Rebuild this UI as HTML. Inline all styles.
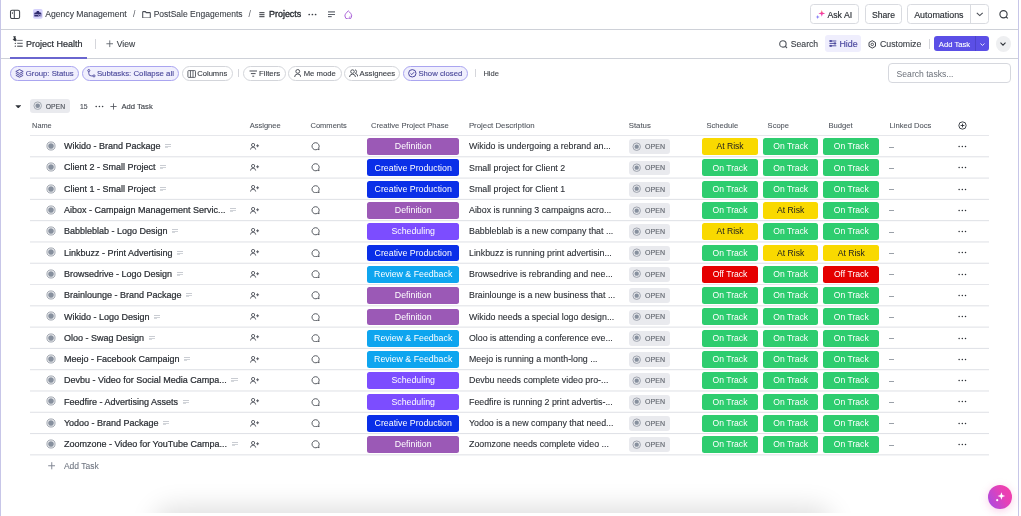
<!DOCTYPE html><html><head><meta charset="utf-8"><style>
html,body{margin:0;padding:0;background:#fff;}
body{width:1021px;height:516px;position:relative;overflow:hidden;font-family:"Liberation Sans", sans-serif;}
#w{position:absolute;left:0;top:0;width:1021px;height:516px;will-change:transform;}
.t{position:absolute;white-space:nowrap;}
.b{position:absolute;}
.nm{font-size:9.0px;line-height:9.0px;color:#2a2e34;-webkit-text-stroke:0.22px #2a2e34;}
.di{display:inline-block;width:6.2px;height:4px;margin-left:4.6px;vertical-align:1.4px;background:linear-gradient(#c9ccd2 0 0.9px,transparent 0.9px 1.9px,#d0d3d8 1.9px 2.8px,transparent 2.8px),linear-gradient(#d6d9dd,#d6d9dd) 0 3px/3.2px 1px no-repeat;}
.tg{font-size:8.6px;line-height:8.6px;text-align:center;}
.ds{font-size:8.83px;line-height:8.83px;color:#2a2e34;-webkit-text-stroke:0.1px #2a2e34;}
</style></head><body><div id="w"><div class="b" style="left:0.00px;top:0.00px;width:1.00px;height:516.00px;background:#c7c6e8"></div>
<div class="b" style="left:1018.00px;top:0.00px;width:1.00px;height:516.00px;background:#c7c6e8"></div>
<div class="b" style="left:1.00px;top:29.00px;width:1017.00px;height:1.00px;background:#ced1d8"></div>
<div class="b" style="left:1.00px;top:58.00px;width:1017.00px;height:1.00px;background:#ced1d8"></div>
<svg class="b" style="left:9.00px;top:9.00px" width="12" height="11" viewBox="0 0 12 11" fill="none"><rect x="1.5" y="1.3" width="9.1" height="8.2" rx="1.5" stroke="#3f434a" stroke-width="1.05"/><line x1="5.3" y1="1.3" x2="5.3" y2="9.5" stroke="#3f434a" stroke-width="1"/><line x1="3.4" y1="3.2" x2="3.4" y2="4.9" stroke="#3f434a" stroke-width="0.9"/></svg>
<svg class="b" style="left:32.60px;top:9.20px" width="10" height="10" viewBox="0 0 10 10" fill="none"><rect x="0" y="0" width="9.6" height="9.8" rx="1.8" fill="#d5d1fc"/><path d="M1.3 4.2 Q1.3 3.4 2.1 3.4 H3.2 L3.9 2 H5.8 L6.6 3.4 H7.4 Q8.3 3.4 8.3 4.3 V7.6 H1.3 Z" fill="#2f2b6e"/><rect x="1.3" y="5.1" width="4.2" height="0.6" fill="#d5d1fc"/><circle cx="6.8" cy="6.6" r="1.3" fill="#d5d1fc"/><circle cx="6.8" cy="6.6" r="0.75" fill="#2f2b6e"/></svg>
<div class="t" style="left:45.20px;top:10.00px;font-size:8.65px;line-height:8.65px;color:#3b3f46;font-weight:400;-webkit-text-stroke:0.1px #3b3f46;">Agency Management</div>
<div class="t" style="left:133.00px;top:10.00px;font-size:8.6px;line-height:8.6px;color:#50545c;font-weight:400;">/</div>
<svg class="b" style="left:141.50px;top:10.80px" width="9" height="7.5" viewBox="0 0 9 7.5" fill="none"><path d="M0.7 1.2 Q0.7 0.6 1.3 0.6 H3.4 L4.2 1.6 H7.7 Q8.3 1.6 8.3 2.2 V6.3 Q8.3 6.9 7.7 6.9 H1.3 Q0.7 6.9 0.7 6.3 Z" stroke="#4a4e56" stroke-width="1.05"/></svg>
<div class="t" style="left:153.70px;top:10.00px;font-size:8.5px;line-height:8.5px;color:#3b3f46;font-weight:400;-webkit-text-stroke:0.1px #3b3f46;">PostSale Engagements</div>
<div class="t" style="left:248.50px;top:10.00px;font-size:8.6px;line-height:8.6px;color:#50545c;font-weight:400;">/</div>
<svg class="b" style="left:258.50px;top:12.00px" width="6" height="5.5" viewBox="0 0 6 5.5" fill="none"><line x1="0.3" y1="0.7" x2="5.5" y2="0.7" stroke="#30343b" stroke-width="1"/><line x1="0.3" y1="2.7" x2="5.5" y2="2.7" stroke="#30343b" stroke-width="1"/><line x1="0.3" y1="4.7" x2="5.5" y2="4.7" stroke="#30343b" stroke-width="1"/></svg>
<div class="t" style="left:269.00px;top:10.00px;font-size:8.95px;line-height:8.95px;color:#2a2e34;font-weight:400;-webkit-text-stroke:0.35px #2a2e34;">Projects</div>
<svg class="b" style="left:307.80px;top:13.00px" width="9" height="3" viewBox="0 0 9 3" fill="none"><circle cx="1.2" cy="1.5" r="0.85" fill="#3b3f46"/><circle cx="4.4" cy="1.5" r="0.85" fill="#3b3f46"/><circle cx="7.6" cy="1.5" r="0.85" fill="#3b3f46"/></svg>
<svg class="b" style="left:327.00px;top:11.00px" width="9" height="7" viewBox="0 0 9 7" fill="none"><line x1="1" y1="0.9" x2="8" y2="0.9" stroke="#5f646c" stroke-width="1.2"/><line x1="1" y1="3.5" x2="8" y2="3.5" stroke="#5f646c" stroke-width="1"/><line x1="1" y1="5.6" x2="4.7" y2="5.6" stroke="#5f646c" stroke-width="1.1"/></svg>
<svg class="b" style="left:344.30px;top:9.60px" width="9" height="9.5" viewBox="0 0 9 9.5" fill="none"><path d="M4.3 0.9 C6.3 2.6 7.7 4.4 7.7 5.9 A3.4 3.2 0 0 1 0.9 5.9 C0.9 4.4 2.3 2.6 4.3 0.9 Z" stroke="#a55ad6" stroke-width="0.95"/><path d="M4.6 8 L6.4 6.3" stroke="#a55ad6" stroke-width="0.85"/></svg>
<div class="b" style="left:810.20px;top:4.40px;width:49.30px;height:19.60px;border:1px solid #d9dbe0;border-radius:3.5px;box-sizing:border-box;background:#fff;"></div>
<svg class="b" style="left:814.50px;top:8.70px" width="11" height="10" viewBox="0 0 11 10" fill="none"><defs><linearGradient id="sg" x1="0" y1="0" x2="0" y2="1"><stop offset="0" stop-color="#fb8a4a"/><stop offset="0.45" stop-color="#f43f9a"/><stop offset="1" stop-color="#e83fd0"/></linearGradient></defs><path d="M6.8 1 L7.6 3.6 L10.2 4.4 L7.6 5.2 L6.8 7.8 L6 5.2 L3.4 4.4 L6 3.6 Z" fill="url(#sg)"/><path d="M2.7 5.9 L3.2 7.4 L4.7 7.9 L3.2 8.4 L2.7 9.9 L2.2 8.4 L0.7 7.9 L2.2 7.4 Z" fill="#7a70f5"/></svg>
<div class="t" style="left:827.40px;top:11.00px;font-size:8.75px;line-height:8.75px;color:#2a2e34;font-weight:400;-webkit-text-stroke:0.15px #2a2e34;">Ask AI</div>
<div class="b" style="left:865.00px;top:4.40px;width:37.20px;height:19.60px;border:1px solid #d9dbe0;border-radius:3.5px;box-sizing:border-box;background:#fff;"></div>
<div class="t" style="left:872.00px;top:11.00px;font-size:8.6px;line-height:8.6px;color:#2a2e34;font-weight:400;-webkit-text-stroke:0.15px #2a2e34;">Share</div>
<div class="b" style="left:907.30px;top:4.40px;width:81.30px;height:19.60px;border:1px solid #d9dbe0;border-radius:3.5px;box-sizing:border-box;background:#fff;"></div>
<div class="b" style="left:969.90px;top:5.00px;width:1.00px;height:18.50px;background:#d9dbe0"></div>
<div class="t" style="left:914.20px;top:11.00px;font-size:8.9px;line-height:8.9px;color:#2a2e34;font-weight:400;-webkit-text-stroke:0.15px #2a2e34;">Automations</div>
<svg class="b" style="left:976.00px;top:12.30px" width="7.5" height="4.5" viewBox="0 0 7.5 4.5" fill="none"><path d="M0.8 0.8 L3.75 3.6 L6.7 0.8" stroke="#4a4e56" stroke-width="1.1"/></svg>
<svg class="b" style="left:998.50px;top:10.00px" width="10.5" height="9" viewBox="0 0 10.5 9" fill="none"><circle cx="4.5" cy="4.2" r="3.6" stroke="#3b3f46" stroke-width="1.15"/><path d="M7 6.8 L8.8 8.4" stroke="#3b3f46" stroke-width="1.15"/></svg>
<svg class="b" style="left:12.00px;top:36.00px" width="11.5" height="11.5" viewBox="0 0 11.5 11.5" fill="none"><path d="M1.2 0.8 H3.9 M2.6 0.8 L2.2 2.6 L1.2 3.6 L3.6 5 L4.2 4.2 Z" stroke="#2f333a" stroke-width="0.9" fill="#2f333a"/><line x1="5.2" y1="4.4" x2="10.7" y2="4.4" stroke="#7b7f87" stroke-width="1"/><circle cx="3.3" cy="7.3" r="0.65" fill="#2f333a"/><line x1="5.2" y1="7.3" x2="10.7" y2="7.3" stroke="#555a62" stroke-width="1"/><circle cx="3.3" cy="10.2" r="0.65" fill="#2f333a"/><line x1="5.2" y1="10.2" x2="10.7" y2="10.2" stroke="#2f333a" stroke-width="1"/></svg>
<div class="t" style="left:26.10px;top:40.00px;font-size:9.0px;line-height:9.0px;color:#2a2e34;font-weight:400;-webkit-text-stroke:0.2px #2a2e34;">Project Health</div>
<div class="b" style="left:10.00px;top:57.00px;width:77.00px;height:2.00px;background:#6a66cf"></div>
<div class="b" style="left:95.00px;top:39.00px;width:1.00px;height:9.60px;background:#d5d6db"></div>
<svg class="b" style="left:105.50px;top:40.00px" width="7.5" height="7.5" viewBox="0 0 7.5 7.5" fill="none"><path d="M3.75 0.4 V7.1 M0.4 3.75 H7.1" stroke="#5a5f67" stroke-width="0.85"/></svg>
<div class="t" style="left:116.80px;top:40.00px;font-size:8.56px;line-height:8.56px;color:#3b3f46;font-weight:400;-webkit-text-stroke:0.12px #3b3f46;">View</div>
<svg class="b" style="left:778.50px;top:39.80px" width="9" height="9" viewBox="0 0 9 9" fill="none"><circle cx="3.9" cy="3.9" r="3.2" stroke="#50545c" stroke-width="1.1"/><path d="M6.2 6.2 L8 8" stroke="#50545c" stroke-width="1.1"/></svg>
<div class="t" style="left:790.80px;top:40.00px;font-size:8.65px;line-height:8.65px;color:#3b3f46;font-weight:400;-webkit-text-stroke:0.12px #3b3f46;">Search</div>
<div class="b" style="left:824.50px;top:35.30px;width:36.20px;height:16.60px;background:#efeefd;border-radius:3px"></div>
<svg class="b" style="left:828.50px;top:40.20px" width="8" height="7" viewBox="0 0 8 7" fill="none"><path d="M0.5 1 H7.3 M0.5 3.4 H7.3 M0.5 5.8 H7.3" stroke="#4d4a9e" stroke-width="0.95"/><rect x="0.6" y="0.1" width="2.2" height="1.9" fill="#4d4a9e"/><rect x="4.8" y="2.5" width="2.2" height="1.9" fill="#4d4a9e"/><rect x="0.6" y="4.9" width="2.2" height="1.9" fill="#4d4a9e"/></svg>
<div class="t" style="left:839.40px;top:40.00px;font-size:8.85px;line-height:8.85px;color:#4a479e;font-weight:400;-webkit-text-stroke:0.15px #4a479e;">Hide</div>
<svg class="b" style="left:867.50px;top:39.70px" width="9" height="9" viewBox="0 0 9 9" fill="none"><path d="M4.25 0.7 L7.5 2.55 V6.25 L4.25 8.1 L1 6.25 V2.55 Z" stroke="#3f434a" stroke-width="1.0" stroke-linejoin="round"/><circle cx="4.25" cy="4.4" r="1.25" stroke="#3f434a" stroke-width="0.9"/></svg>
<div class="t" style="left:880.00px;top:40.00px;font-size:8.76px;line-height:8.76px;color:#3b3f46;font-weight:400;-webkit-text-stroke:0.12px #3b3f46;">Customize</div>
<div class="b" style="left:929.00px;top:39.00px;width:1.00px;height:9.60px;background:#d5d6db"></div>
<div class="b" style="left:933.60px;top:36.40px;width:55.20px;height:14.80px;background:#5b4fe6;border-radius:3px"></div>
<div class="b" style="left:975.20px;top:36.40px;width:0.80px;height:14.80px;background:#4d43cc"></div>
<div class="t" style="left:938.80px;top:41.00px;font-size:7.67px;line-height:7.67px;color:#ffffff;font-weight:400;-webkit-text-stroke:0.1px #ffffff;">Add Task</div>
<svg class="b" style="left:979.60px;top:42.60px" width="5" height="3.2" viewBox="0 0 5 3.2" fill="none"><path d="M0.5 0.5 L2.5 2.5 L4.5 0.5" stroke="#fff" stroke-width="0.85"/></svg>
<div class="b" style="left:995.50px;top:35.80px;width:15.80px;height:16.00px;background:#eeeff1;border-radius:50%"></div>
<svg class="b" style="left:1000.40px;top:42.40px" width="6" height="4" viewBox="0 0 6 4" fill="none"><path d="M0.5 0.6 L3 3.2 L5.5 0.6" stroke="#30343b" stroke-width="1.05"/></svg>
<div class="b" style="left:10.20px;top:66.00px;width:68.80px;height:14.70px;border:1px solid #aaa5f0;background:#f0effd;border-radius:8px;box-sizing:border-box"></div>
<svg class="b" style="left:14.80px;top:69.00px" width="9" height="9" viewBox="0 0 9 9" fill="none"><path d="M4.5 0.6 L8.2 2.5 L4.5 4.4 L0.8 2.5 Z" stroke="#4b479c" stroke-width="0.95" stroke-linejoin="round"/><path d="M0.8 4.4 L4.5 6.3 L8.2 4.4" stroke="#4b479c" stroke-width="0.95"/><path d="M0.8 6.3 L4.5 8.2 L8.2 6.3" stroke="#4b479c" stroke-width="0.95"/></svg>
<div class="t" style="left:25.80px;top:70.00px;font-size:7.75px;line-height:7.75px;color:#49479a;font-weight:400;-webkit-text-stroke:0.12px #49479a;">Group: Status</div>
<div class="b" style="left:81.90px;top:66.00px;width:97.60px;height:14.70px;border:1px solid #aaa5f0;background:#f0effd;border-radius:8px;box-sizing:border-box"></div>
<svg class="b" style="left:86.50px;top:68.80px" width="9" height="9" viewBox="0 0 9 9" fill="none"><circle cx="1.8" cy="1.6" r="1.05" stroke="#4b479c" stroke-width="0.9"/><circle cx="7" cy="6.9" r="1.05" stroke="#4b479c" stroke-width="0.9"/><path d="M1.8 2.7 V4.6 Q1.8 6.9 4.2 6.9 H5.9" stroke="#4b479c" stroke-width="0.9"/></svg>
<div class="t" style="left:96.90px;top:70.00px;font-size:7.84px;line-height:7.84px;color:#49479a;font-weight:400;-webkit-text-stroke:0.12px #49479a;">Subtasks: Collapse all</div>
<div class="b" style="left:181.90px;top:66.00px;width:50.90px;height:14.70px;border:1px solid #d3d5da;background:#fff;border-radius:8px;box-sizing:border-box"></div>
<svg class="b" style="left:186.50px;top:69.50px" width="9.5" height="8" viewBox="0 0 9.5 8" fill="none"><rect x="0.9" y="0.6" width="7.6" height="6.8" rx="0.7" stroke="#4a4e56" stroke-width="0.85"/><path d="M3.45 0.6 V7.4 M6 0.6 V7.4" stroke="#4a4e56" stroke-width="0.85"/></svg>
<div class="t" style="left:197.20px;top:70.00px;font-size:7.63px;line-height:7.63px;color:#3b3f46;font-weight:400;-webkit-text-stroke:0.12px #3b3f46;">Columns</div>
<div class="b" style="left:238.00px;top:69.40px;width:0.90px;height:8.10px;background:#d5d6db"></div>
<div class="b" style="left:243.30px;top:66.00px;width:42.30px;height:14.70px;border:1px solid #d3d5da;background:#fff;border-radius:8px;box-sizing:border-box"></div>
<svg class="b" style="left:248.50px;top:70.00px" width="8.5" height="7.5" viewBox="0 0 8.5 7.5" fill="none"><path d="M0.5 1 H8 M1.9 3.6 H6.6 M3.3 6.2 H5.2" stroke="#4a4e56" stroke-width="1"/></svg>
<div class="t" style="left:259.00px;top:70.00px;font-size:7.79px;line-height:7.79px;color:#3b3f46;font-weight:400;-webkit-text-stroke:0.12px #3b3f46;">Filters</div>
<div class="b" style="left:288.30px;top:66.00px;width:53.30px;height:14.70px;border:1px solid #d3d5da;background:#fff;border-radius:8px;box-sizing:border-box"></div>
<svg class="b" style="left:293.80px;top:69.20px" width="7.5" height="8.5" viewBox="0 0 7.5 8.5" fill="none"><circle cx="3.75" cy="2.4" r="1.9" stroke="#4a4e56" stroke-width="0.95"/><path d="M0.6 8 Q0.8 5 3.75 5 Q6.7 5 6.9 8" stroke="#4a4e56" stroke-width="0.95"/></svg>
<div class="t" style="left:303.70px;top:70.00px;font-size:7.7px;line-height:7.7px;color:#3b3f46;font-weight:400;-webkit-text-stroke:0.12px #3b3f46;">Me mode</div>
<div class="b" style="left:344.40px;top:66.00px;width:55.90px;height:14.70px;border:1px solid #d3d5da;background:#fff;border-radius:8px;box-sizing:border-box"></div>
<svg class="b" style="left:348.60px;top:69.20px" width="9.5" height="8.5" viewBox="0 0 9.5 8.5" fill="none"><circle cx="3.5" cy="2.6" r="1.8" stroke="#4a4e56" stroke-width="0.95"/><path d="M0.5 8 Q0.7 5.2 3.5 5.2 Q6.3 5.2 6.5 8" stroke="#4a4e56" stroke-width="0.95"/><path d="M6 0.8 A1.8 1.8 0 0 1 6.3 4.3 Q8.6 4.8 8.9 7.6" stroke="#4a4e56" stroke-width="0.95"/></svg>
<div class="t" style="left:359.60px;top:70.00px;font-size:7.72px;line-height:7.72px;color:#3b3f46;font-weight:400;-webkit-text-stroke:0.12px #3b3f46;">Assignees</div>
<div class="b" style="left:403.00px;top:66.00px;width:64.70px;height:14.70px;border:1px solid #aaa5f0;background:#f0effd;border-radius:8px;box-sizing:border-box"></div>
<svg class="b" style="left:407.50px;top:69.20px" width="9" height="9" viewBox="0 0 9 9" fill="none"><circle cx="4.3" cy="4.3" r="3.7" stroke="#4b479c" stroke-width="1"/><path d="M2.5 4.4 L3.8 5.6 L6.1 3.2" stroke="#4b479c" stroke-width="1"/></svg>
<div class="t" style="left:418.40px;top:70.00px;font-size:7.74px;line-height:7.74px;color:#49479a;font-weight:400;-webkit-text-stroke:0.12px #49479a;">Show closed</div>
<div class="b" style="left:475.30px;top:69.40px;width:0.90px;height:8.10px;background:#d5d6db"></div>
<div class="t" style="left:483.40px;top:70.00px;font-size:7.58px;line-height:7.58px;color:#3b3f46;font-weight:400;-webkit-text-stroke:0.08px #3b3f46;">Hide</div>
<div class="b" style="left:888.30px;top:63.00px;width:123.20px;height:20.00px;border:1px solid #d6d8de;border-radius:4px;box-sizing:border-box;background:#fff"></div>
<div class="t" style="left:896.60px;top:70.00px;font-size:8.6px;line-height:8.6px;color:#6b7079;font-weight:400;">Search tasks...</div>
<svg class="b" style="left:14.50px;top:104.50px" width="6.5" height="3.8" viewBox="0 0 6.5 3.8" fill="none"><path d="M0.3 0.3 H6.2 L3.25 3.5 Z" fill="#2f333a"/></svg>
<div class="b" style="left:29.80px;top:99.00px;width:40.70px;height:14.20px;background:#e9eaee;border-radius:3px"></div>
<svg class="b" style="left:32.70px;top:101.30px" width="9.4" height="9.4" viewBox="0 0 9.4 9.4" fill="none"><circle cx="4.7" cy="4.7" r="3.7750000000000004" stroke="#9aa0aa" stroke-width="0.85"/><circle cx="4.7" cy="4.7" r="2.31" fill="#87909e"/></svg>
<div class="t" style="left:45.80px;top:104.00px;font-size:6.8px;line-height:6.8px;color:#50555d;font-weight:400;-webkit-text-stroke:0.15px #50555d;">OPEN</div>
<div class="t" style="left:80.00px;top:104.00px;font-size:6.8px;line-height:6.8px;color:#50555d;font-weight:400;-webkit-text-stroke:0.15px #50555d;">15</div>
<svg class="b" style="left:95.00px;top:104.60px" width="9" height="3" viewBox="0 0 9 3" fill="none"><circle cx="1.2" cy="1.5" r="0.8" fill="#3b3f46"/><circle cx="4.4" cy="1.5" r="0.8" fill="#3b3f46"/><circle cx="7.6" cy="1.5" r="0.8" fill="#3b3f46"/></svg>
<svg class="b" style="left:110.20px;top:102.60px" width="7" height="7" viewBox="0 0 7 7" fill="none"><path d="M3.5 0.4 V6.6 M0.4 3.5 H6.6" stroke="#50545c" stroke-width="0.85"/></svg>
<div class="t" style="left:121.50px;top:103.00px;font-size:7.64px;line-height:7.64px;color:#3b3f46;font-weight:400;-webkit-text-stroke:0.12px #3b3f46;">Add Task</div>
<div class="t" style="left:32.10px;top:122.00px;font-size:7.35px;line-height:7.35px;color:#50555d;font-weight:400;-webkit-text-stroke:0.08px #50555d;">Name</div>
<div class="t" style="left:249.70px;top:122.00px;font-size:7.54px;line-height:7.54px;color:#50555d;font-weight:400;-webkit-text-stroke:0.08px #50555d;">Assignee</div>
<div class="t" style="left:310.50px;top:122.00px;font-size:7.53px;line-height:7.53px;color:#50555d;font-weight:400;-webkit-text-stroke:0.08px #50555d;">Comments</div>
<div class="t" style="left:371.00px;top:122.00px;font-size:7.6px;line-height:7.6px;color:#50555d;font-weight:400;-webkit-text-stroke:0.08px #50555d;">Creative Project Phase</div>
<div class="t" style="left:468.90px;top:122.00px;font-size:7.83px;line-height:7.83px;color:#50555d;font-weight:400;-webkit-text-stroke:0.08px #50555d;">Project Description</div>
<div class="t" style="left:628.70px;top:122.00px;font-size:7.8px;line-height:7.8px;color:#50555d;font-weight:400;-webkit-text-stroke:0.08px #50555d;">Status</div>
<div class="t" style="left:706.50px;top:122.00px;font-size:7.6px;line-height:7.6px;color:#50555d;font-weight:400;-webkit-text-stroke:0.08px #50555d;">Schedule</div>
<div class="t" style="left:767.60px;top:122.00px;font-size:7.55px;line-height:7.55px;color:#50555d;font-weight:400;-webkit-text-stroke:0.08px #50555d;">Scope</div>
<div class="t" style="left:828.40px;top:122.00px;font-size:7.7px;line-height:7.7px;color:#50555d;font-weight:400;-webkit-text-stroke:0.08px #50555d;">Budget</div>
<div class="t" style="left:889.50px;top:122.00px;font-size:7.6px;line-height:7.6px;color:#50555d;font-weight:400;-webkit-text-stroke:0.08px #50555d;">Linked Docs</div>
<svg class="b" style="left:957.50px;top:121.30px" width="9" height="9" viewBox="0 0 9 9" fill="none"><circle cx="4.5" cy="4.5" r="3.65" stroke="#2f333a" stroke-width="0.9"/><path d="M4.5 2.6 V6.4 M2.6 4.5 H6.4" stroke="#2f333a" stroke-width="0.9"/></svg>
<div class="b" style="left:29.50px;top:135.00px;width:959.50px;height:1.00px;background:#e6e7eb"></div>
<div class="b" style="left:29.50px;top:156.00px;width:959.50px;height:1.00px;background:rgba(222,224,229,0.71)"></div>
<div class="b" style="left:29.50px;top:157.00px;width:959.50px;height:1.00px;background:rgba(222,224,229,0.29)"></div>
<div class="b" style="left:29.50px;top:177.00px;width:959.50px;height:1.00px;background:rgba(222,224,229,0.42)"></div>
<div class="b" style="left:29.50px;top:178.00px;width:959.50px;height:1.00px;background:rgba(222,224,229,0.58)"></div>
<div class="b" style="left:29.50px;top:198.00px;width:959.50px;height:1.00px;background:rgba(222,224,229,0.13)"></div>
<div class="b" style="left:29.50px;top:199.00px;width:959.50px;height:1.00px;background:rgba(222,224,229,0.87)"></div>
<div class="b" style="left:29.50px;top:220.00px;width:959.50px;height:1.00px;background:rgba(222,224,229,0.84)"></div>
<div class="b" style="left:29.50px;top:221.00px;width:959.50px;height:1.00px;background:rgba(222,224,229,0.16)"></div>
<div class="b" style="left:29.50px;top:241.00px;width:959.50px;height:1.00px;background:rgba(222,224,229,0.55)"></div>
<div class="b" style="left:29.50px;top:242.00px;width:959.50px;height:1.00px;background:rgba(222,224,229,0.45)"></div>
<div class="b" style="left:29.50px;top:262.00px;width:959.50px;height:1.00px;background:rgba(222,224,229,0.26)"></div>
<div class="b" style="left:29.50px;top:263.00px;width:959.50px;height:1.00px;background:rgba(222,224,229,0.74)"></div>
<div class="b" style="left:29.50px;top:284.00px;width:959.50px;height:1.00px;background:#e6e7eb"></div>
<div class="b" style="left:29.50px;top:305.00px;width:959.50px;height:1.00px;background:rgba(222,224,229,0.68)"></div>
<div class="b" style="left:29.50px;top:306.00px;width:959.50px;height:1.00px;background:rgba(222,224,229,0.32)"></div>
<div class="b" style="left:29.50px;top:326.00px;width:959.50px;height:1.00px;background:rgba(222,224,229,0.39)"></div>
<div class="b" style="left:29.50px;top:327.00px;width:959.50px;height:1.00px;background:rgba(222,224,229,0.61)"></div>
<div class="b" style="left:29.50px;top:347.00px;width:959.50px;height:1.00px;background:rgba(222,224,229,0.10)"></div>
<div class="b" style="left:29.50px;top:348.00px;width:959.50px;height:1.00px;background:rgba(222,224,229,0.90)"></div>
<div class="b" style="left:29.50px;top:369.00px;width:959.50px;height:1.00px;background:rgba(222,224,229,0.81)"></div>
<div class="b" style="left:29.50px;top:370.00px;width:959.50px;height:1.00px;background:rgba(222,224,229,0.19)"></div>
<div class="b" style="left:29.50px;top:390.00px;width:959.50px;height:1.00px;background:rgba(222,224,229,0.52)"></div>
<div class="b" style="left:29.50px;top:391.00px;width:959.50px;height:1.00px;background:rgba(222,224,229,0.48)"></div>
<div class="b" style="left:29.50px;top:411.00px;width:959.50px;height:1.00px;background:rgba(222,224,229,0.23)"></div>
<div class="b" style="left:29.50px;top:412.00px;width:959.50px;height:1.00px;background:rgba(222,224,229,0.77)"></div>
<div class="b" style="left:29.50px;top:433.00px;width:959.50px;height:1.00px;background:rgba(222,224,229,0.94)"></div>
<div class="b" style="left:29.50px;top:434.00px;width:959.50px;height:1.00px;background:rgba(222,224,229,0.06)"></div>
<div class="b" style="left:29.50px;top:454.00px;width:959.50px;height:1.00px;background:rgba(222,224,229,0.65)"></div>
<div class="b" style="left:29.50px;top:455.00px;width:959.50px;height:1.00px;background:rgba(222,224,229,0.35)"></div>
<svg class="b" style="left:46.20px;top:141.00px" width="10.0" height="10.0" viewBox="0 0 10.0 10.0" fill="none"><circle cx="5.0" cy="5.0" r="4.025" stroke="#959ba6" stroke-width="0.95"/><circle cx="5.0" cy="5.0" r="2.83" fill="#87909e"/></svg>
<div class="t nm" style="left:63.9px;top:142px">Wikido - Brand Package<span class="di"></span></div>
<svg class="b" style="left:249.80px;top:142.80px" width="10" height="7" viewBox="0 0 10 7" fill="none"><circle cx="3.1" cy="2" r="1.6" stroke="#50545c" stroke-width="0.9"/><path d="M0.5 6.6 Q0.6 4.2 3.1 4.2 Q5.6 4.2 5.7 6.6" stroke="#50545c" stroke-width="0.9"/><path d="M7.6 1.3 V4.2 M6.15 2.75 H9.05" stroke="#50545c" stroke-width="0.9"/></svg>
<svg class="b" style="left:310.60px;top:142.20px" width="10" height="8.5" viewBox="0 0 10 8.5" fill="none"><path d="M4.4 0.7 A3.65 3.55 0 1 0 6.5 7.3 L8.1 7.7 L7.7 6.0 A3.65 3.55 0 0 0 4.4 0.7 Z" stroke="#50545c" stroke-width="0.95" stroke-linejoin="round"/></svg>
<div class="b" style="left:367.30px;top:138.20px;width:91.80px;height:16.80px;background:#9b59b6;border-radius:2.5px"></div>
<div class="t tg" style="left:367.3px;width:91.8px;top:142px;font-size:8.8px;line-height:8.8px;color:#fff">Definition</div>
<div class="t ds" style="left:469px;top:142px">Wikido is undergoing a rebrand an...</div>
<div class="b" style="left:629.20px;top:139.30px;width:40.80px;height:14.90px;background:#e9eaee;border-radius:3px"></div>
<svg class="b" style="left:632.20px;top:141.70px" width="9.4" height="9.4" viewBox="0 0 9.4 9.4" fill="none"><circle cx="4.7" cy="4.7" r="3.75" stroke="#959ba6" stroke-width="0.9"/><circle cx="4.7" cy="4.7" r="2.18" fill="#87909e"/></svg>
<div class="t" style="left:645.00px;top:143.00px;font-size:7.06px;line-height:7.06px;color:#5f646c;font-weight:400;-webkit-text-stroke:0.12px #5f646c;">OPEN</div>
<div class="b" style="left:702.40px;top:138.10px;width:55.30px;height:16.90px;background:#f9d900;border-radius:2.5px"></div>
<div class="t tg" style="left:702.4px;width:55.3px;top:142px;color:#202020">At Risk</div>
<div class="b" style="left:762.90px;top:138.10px;width:55.50px;height:16.90px;background:#2ecd6f;border-radius:2.5px"></div>
<div class="t tg" style="left:762.9px;width:55.5px;top:142px;color:#ffffff">On Track</div>
<div class="b" style="left:823.40px;top:138.10px;width:55.80px;height:16.90px;background:#2ecd6f;border-radius:2.5px"></div>
<div class="t tg" style="left:823.4px;width:55.8px;top:142px;color:#ffffff">On Track</div>
<div class="b" style="left:889.20px;top:146.50px;width:4.60px;height:1.00px;background:#9aa0a8"></div>
<svg class="b" style="left:957.80px;top:145.00px" width="9" height="3" viewBox="0 0 9 3" fill="none"><circle cx="1.1" cy="1.5" r="0.75" fill="#2a2e34"/><circle cx="4.3" cy="1.5" r="0.75" fill="#2a2e34"/><circle cx="7.5" cy="1.5" r="0.75" fill="#2a2e34"/></svg>
<svg class="b" style="left:46.20px;top:162.29px" width="10.0" height="10.0" viewBox="0 0 10.0 10.0" fill="none"><circle cx="5.0" cy="5.0" r="4.025" stroke="#959ba6" stroke-width="0.95"/><circle cx="5.0" cy="5.0" r="2.83" fill="#87909e"/></svg>
<div class="t nm" style="left:63.9px;top:163px">Client 2 - Small Project<span class="di"></span></div>
<svg class="b" style="left:249.80px;top:164.09px" width="10" height="7" viewBox="0 0 10 7" fill="none"><circle cx="3.1" cy="2" r="1.6" stroke="#50545c" stroke-width="0.9"/><path d="M0.5 6.6 Q0.6 4.2 3.1 4.2 Q5.6 4.2 5.7 6.6" stroke="#50545c" stroke-width="0.9"/><path d="M7.6 1.3 V4.2 M6.15 2.75 H9.05" stroke="#50545c" stroke-width="0.9"/></svg>
<svg class="b" style="left:310.60px;top:163.49px" width="10" height="8.5" viewBox="0 0 10 8.5" fill="none"><path d="M4.4 0.7 A3.65 3.55 0 1 0 6.5 7.3 L8.1 7.7 L7.7 6.0 A3.65 3.55 0 0 0 4.4 0.7 Z" stroke="#50545c" stroke-width="0.95" stroke-linejoin="round"/></svg>
<div class="b" style="left:367.30px;top:159.49px;width:91.80px;height:16.80px;background:#0a2fe8;border-radius:2.5px"></div>
<div class="t tg" style="left:367.3px;width:91.8px;top:164px;font-size:8.8px;line-height:8.8px;color:#fff">Creative Production</div>
<div class="t ds" style="left:469px;top:164px">Small project for Client 2</div>
<div class="b" style="left:629.20px;top:160.59px;width:40.80px;height:14.90px;background:#e9eaee;border-radius:3px"></div>
<svg class="b" style="left:632.20px;top:162.99px" width="9.4" height="9.4" viewBox="0 0 9.4 9.4" fill="none"><circle cx="4.7" cy="4.7" r="3.75" stroke="#959ba6" stroke-width="0.9"/><circle cx="4.7" cy="4.7" r="2.18" fill="#87909e"/></svg>
<div class="t" style="left:645.00px;top:164.00px;font-size:7.06px;line-height:7.06px;color:#5f646c;font-weight:400;-webkit-text-stroke:0.12px #5f646c;">OPEN</div>
<div class="b" style="left:702.40px;top:159.39px;width:55.30px;height:16.90px;background:#2ecd6f;border-radius:2.5px"></div>
<div class="t tg" style="left:702.4px;width:55.3px;top:164px;color:#ffffff">On Track</div>
<div class="b" style="left:762.90px;top:159.39px;width:55.50px;height:16.90px;background:#2ecd6f;border-radius:2.5px"></div>
<div class="t tg" style="left:762.9px;width:55.5px;top:164px;color:#ffffff">On Track</div>
<div class="b" style="left:823.40px;top:159.39px;width:55.80px;height:16.90px;background:#2ecd6f;border-radius:2.5px"></div>
<div class="t tg" style="left:823.4px;width:55.8px;top:164px;color:#ffffff">On Track</div>
<div class="b" style="left:889.20px;top:167.79px;width:4.60px;height:1.00px;background:#9aa0a8"></div>
<svg class="b" style="left:957.80px;top:166.29px" width="9" height="3" viewBox="0 0 9 3" fill="none"><circle cx="1.1" cy="1.5" r="0.75" fill="#2a2e34"/><circle cx="4.3" cy="1.5" r="0.75" fill="#2a2e34"/><circle cx="7.5" cy="1.5" r="0.75" fill="#2a2e34"/></svg>
<svg class="b" style="left:46.20px;top:183.58px" width="10.0" height="10.0" viewBox="0 0 10.0 10.0" fill="none"><circle cx="5.0" cy="5.0" r="4.025" stroke="#959ba6" stroke-width="0.95"/><circle cx="5.0" cy="5.0" r="2.83" fill="#87909e"/></svg>
<div class="t nm" style="left:63.9px;top:185px">Client 1 - Small Project<span class="di"></span></div>
<svg class="b" style="left:249.80px;top:185.38px" width="10" height="7" viewBox="0 0 10 7" fill="none"><circle cx="3.1" cy="2" r="1.6" stroke="#50545c" stroke-width="0.9"/><path d="M0.5 6.6 Q0.6 4.2 3.1 4.2 Q5.6 4.2 5.7 6.6" stroke="#50545c" stroke-width="0.9"/><path d="M7.6 1.3 V4.2 M6.15 2.75 H9.05" stroke="#50545c" stroke-width="0.9"/></svg>
<svg class="b" style="left:310.60px;top:184.78px" width="10" height="8.5" viewBox="0 0 10 8.5" fill="none"><path d="M4.4 0.7 A3.65 3.55 0 1 0 6.5 7.3 L8.1 7.7 L7.7 6.0 A3.65 3.55 0 0 0 4.4 0.7 Z" stroke="#50545c" stroke-width="0.95" stroke-linejoin="round"/></svg>
<div class="b" style="left:367.30px;top:180.78px;width:91.80px;height:16.80px;background:#0a2fe8;border-radius:2.5px"></div>
<div class="t tg" style="left:367.3px;width:91.8px;top:185px;font-size:8.8px;line-height:8.8px;color:#fff">Creative Production</div>
<div class="t ds" style="left:469px;top:185px">Small project for Client 1</div>
<div class="b" style="left:629.20px;top:181.88px;width:40.80px;height:14.90px;background:#e9eaee;border-radius:3px"></div>
<svg class="b" style="left:632.20px;top:184.28px" width="9.4" height="9.4" viewBox="0 0 9.4 9.4" fill="none"><circle cx="4.7" cy="4.7" r="3.75" stroke="#959ba6" stroke-width="0.9"/><circle cx="4.7" cy="4.7" r="2.18" fill="#87909e"/></svg>
<div class="t" style="left:645.00px;top:186.00px;font-size:7.06px;line-height:7.06px;color:#5f646c;font-weight:400;-webkit-text-stroke:0.12px #5f646c;">OPEN</div>
<div class="b" style="left:702.40px;top:180.68px;width:55.30px;height:16.90px;background:#2ecd6f;border-radius:2.5px"></div>
<div class="t tg" style="left:702.4px;width:55.3px;top:185px;color:#ffffff">On Track</div>
<div class="b" style="left:762.90px;top:180.68px;width:55.50px;height:16.90px;background:#2ecd6f;border-radius:2.5px"></div>
<div class="t tg" style="left:762.9px;width:55.5px;top:185px;color:#ffffff">On Track</div>
<div class="b" style="left:823.40px;top:180.68px;width:55.80px;height:16.90px;background:#2ecd6f;border-radius:2.5px"></div>
<div class="t tg" style="left:823.4px;width:55.8px;top:185px;color:#ffffff">On Track</div>
<div class="b" style="left:889.20px;top:189.08px;width:4.60px;height:1.00px;background:#9aa0a8"></div>
<svg class="b" style="left:957.80px;top:187.58px" width="9" height="3" viewBox="0 0 9 3" fill="none"><circle cx="1.1" cy="1.5" r="0.75" fill="#2a2e34"/><circle cx="4.3" cy="1.5" r="0.75" fill="#2a2e34"/><circle cx="7.5" cy="1.5" r="0.75" fill="#2a2e34"/></svg>
<svg class="b" style="left:46.20px;top:204.87px" width="10.0" height="10.0" viewBox="0 0 10.0 10.0" fill="none"><circle cx="5.0" cy="5.0" r="4.025" stroke="#959ba6" stroke-width="0.95"/><circle cx="5.0" cy="5.0" r="2.83" fill="#87909e"/></svg>
<div class="t nm" style="left:63.9px;top:206px">Aibox - Campaign Management Servic...<span class="di"></span></div>
<svg class="b" style="left:249.80px;top:206.67px" width="10" height="7" viewBox="0 0 10 7" fill="none"><circle cx="3.1" cy="2" r="1.6" stroke="#50545c" stroke-width="0.9"/><path d="M0.5 6.6 Q0.6 4.2 3.1 4.2 Q5.6 4.2 5.7 6.6" stroke="#50545c" stroke-width="0.9"/><path d="M7.6 1.3 V4.2 M6.15 2.75 H9.05" stroke="#50545c" stroke-width="0.9"/></svg>
<svg class="b" style="left:310.60px;top:206.07px" width="10" height="8.5" viewBox="0 0 10 8.5" fill="none"><path d="M4.4 0.7 A3.65 3.55 0 1 0 6.5 7.3 L8.1 7.7 L7.7 6.0 A3.65 3.55 0 0 0 4.4 0.7 Z" stroke="#50545c" stroke-width="0.95" stroke-linejoin="round"/></svg>
<div class="b" style="left:367.30px;top:202.07px;width:91.80px;height:16.80px;background:#9b59b6;border-radius:2.5px"></div>
<div class="t tg" style="left:367.3px;width:91.8px;top:206px;font-size:8.8px;line-height:8.8px;color:#fff">Definition</div>
<div class="t ds" style="left:469px;top:206px">Aibox is running 3 campaigns acro...</div>
<div class="b" style="left:629.20px;top:203.17px;width:40.80px;height:14.90px;background:#e9eaee;border-radius:3px"></div>
<svg class="b" style="left:632.20px;top:205.57px" width="9.4" height="9.4" viewBox="0 0 9.4 9.4" fill="none"><circle cx="4.7" cy="4.7" r="3.75" stroke="#959ba6" stroke-width="0.9"/><circle cx="4.7" cy="4.7" r="2.18" fill="#87909e"/></svg>
<div class="t" style="left:645.00px;top:207.00px;font-size:7.06px;line-height:7.06px;color:#5f646c;font-weight:400;-webkit-text-stroke:0.12px #5f646c;">OPEN</div>
<div class="b" style="left:702.40px;top:201.97px;width:55.30px;height:16.90px;background:#2ecd6f;border-radius:2.5px"></div>
<div class="t tg" style="left:702.4px;width:55.3px;top:206px;color:#ffffff">On Track</div>
<div class="b" style="left:762.90px;top:201.97px;width:55.50px;height:16.90px;background:#f9d900;border-radius:2.5px"></div>
<div class="t tg" style="left:762.9px;width:55.5px;top:206px;color:#202020">At Risk</div>
<div class="b" style="left:823.40px;top:201.97px;width:55.80px;height:16.90px;background:#2ecd6f;border-radius:2.5px"></div>
<div class="t tg" style="left:823.4px;width:55.8px;top:206px;color:#ffffff">On Track</div>
<div class="b" style="left:889.20px;top:210.37px;width:4.60px;height:1.00px;background:#9aa0a8"></div>
<svg class="b" style="left:957.80px;top:208.87px" width="9" height="3" viewBox="0 0 9 3" fill="none"><circle cx="1.1" cy="1.5" r="0.75" fill="#2a2e34"/><circle cx="4.3" cy="1.5" r="0.75" fill="#2a2e34"/><circle cx="7.5" cy="1.5" r="0.75" fill="#2a2e34"/></svg>
<svg class="b" style="left:46.20px;top:226.16px" width="10.0" height="10.0" viewBox="0 0 10.0 10.0" fill="none"><circle cx="5.0" cy="5.0" r="4.025" stroke="#959ba6" stroke-width="0.95"/><circle cx="5.0" cy="5.0" r="2.83" fill="#87909e"/></svg>
<div class="t nm" style="left:63.9px;top:227px">Babbleblab - Logo Design<span class="di"></span></div>
<svg class="b" style="left:249.80px;top:227.96px" width="10" height="7" viewBox="0 0 10 7" fill="none"><circle cx="3.1" cy="2" r="1.6" stroke="#50545c" stroke-width="0.9"/><path d="M0.5 6.6 Q0.6 4.2 3.1 4.2 Q5.6 4.2 5.7 6.6" stroke="#50545c" stroke-width="0.9"/><path d="M7.6 1.3 V4.2 M6.15 2.75 H9.05" stroke="#50545c" stroke-width="0.9"/></svg>
<svg class="b" style="left:310.60px;top:227.36px" width="10" height="8.5" viewBox="0 0 10 8.5" fill="none"><path d="M4.4 0.7 A3.65 3.55 0 1 0 6.5 7.3 L8.1 7.7 L7.7 6.0 A3.65 3.55 0 0 0 4.4 0.7 Z" stroke="#50545c" stroke-width="0.95" stroke-linejoin="round"/></svg>
<div class="b" style="left:367.30px;top:223.36px;width:91.80px;height:16.80px;background:#7c4dff;border-radius:2.5px"></div>
<div class="t tg" style="left:367.3px;width:91.8px;top:227px;font-size:8.8px;line-height:8.8px;color:#fff">Scheduling</div>
<div class="t ds" style="left:469px;top:227px">Babbleblab is a new company that ...</div>
<div class="b" style="left:629.20px;top:224.46px;width:40.80px;height:14.90px;background:#e9eaee;border-radius:3px"></div>
<svg class="b" style="left:632.20px;top:226.86px" width="9.4" height="9.4" viewBox="0 0 9.4 9.4" fill="none"><circle cx="4.7" cy="4.7" r="3.75" stroke="#959ba6" stroke-width="0.9"/><circle cx="4.7" cy="4.7" r="2.18" fill="#87909e"/></svg>
<div class="t" style="left:645.00px;top:228.00px;font-size:7.06px;line-height:7.06px;color:#5f646c;font-weight:400;-webkit-text-stroke:0.12px #5f646c;">OPEN</div>
<div class="b" style="left:702.40px;top:223.26px;width:55.30px;height:16.90px;background:#f9d900;border-radius:2.5px"></div>
<div class="t tg" style="left:702.4px;width:55.3px;top:227px;color:#202020">At Risk</div>
<div class="b" style="left:762.90px;top:223.26px;width:55.50px;height:16.90px;background:#2ecd6f;border-radius:2.5px"></div>
<div class="t tg" style="left:762.9px;width:55.5px;top:227px;color:#ffffff">On Track</div>
<div class="b" style="left:823.40px;top:223.26px;width:55.80px;height:16.90px;background:#2ecd6f;border-radius:2.5px"></div>
<div class="t tg" style="left:823.4px;width:55.8px;top:227px;color:#ffffff">On Track</div>
<div class="b" style="left:889.20px;top:231.66px;width:4.60px;height:1.00px;background:#9aa0a8"></div>
<svg class="b" style="left:957.80px;top:230.16px" width="9" height="3" viewBox="0 0 9 3" fill="none"><circle cx="1.1" cy="1.5" r="0.75" fill="#2a2e34"/><circle cx="4.3" cy="1.5" r="0.75" fill="#2a2e34"/><circle cx="7.5" cy="1.5" r="0.75" fill="#2a2e34"/></svg>
<svg class="b" style="left:46.20px;top:247.45px" width="10.0" height="10.0" viewBox="0 0 10.0 10.0" fill="none"><circle cx="5.0" cy="5.0" r="4.025" stroke="#959ba6" stroke-width="0.95"/><circle cx="5.0" cy="5.0" r="2.83" fill="#87909e"/></svg>
<div class="t nm" style="left:63.9px;top:249px">Linkbuzz - Print Advertising<span class="di"></span></div>
<svg class="b" style="left:249.80px;top:249.25px" width="10" height="7" viewBox="0 0 10 7" fill="none"><circle cx="3.1" cy="2" r="1.6" stroke="#50545c" stroke-width="0.9"/><path d="M0.5 6.6 Q0.6 4.2 3.1 4.2 Q5.6 4.2 5.7 6.6" stroke="#50545c" stroke-width="0.9"/><path d="M7.6 1.3 V4.2 M6.15 2.75 H9.05" stroke="#50545c" stroke-width="0.9"/></svg>
<svg class="b" style="left:310.60px;top:248.65px" width="10" height="8.5" viewBox="0 0 10 8.5" fill="none"><path d="M4.4 0.7 A3.65 3.55 0 1 0 6.5 7.3 L8.1 7.7 L7.7 6.0 A3.65 3.55 0 0 0 4.4 0.7 Z" stroke="#50545c" stroke-width="0.95" stroke-linejoin="round"/></svg>
<div class="b" style="left:367.30px;top:244.65px;width:91.80px;height:16.80px;background:#0a2fe8;border-radius:2.5px"></div>
<div class="t tg" style="left:367.3px;width:91.8px;top:249px;font-size:8.8px;line-height:8.8px;color:#fff">Creative Production</div>
<div class="t ds" style="left:469px;top:249px">Linkbuzz is running print advertisin...</div>
<div class="b" style="left:629.20px;top:245.75px;width:40.80px;height:14.90px;background:#e9eaee;border-radius:3px"></div>
<svg class="b" style="left:632.20px;top:248.15px" width="9.4" height="9.4" viewBox="0 0 9.4 9.4" fill="none"><circle cx="4.7" cy="4.7" r="3.75" stroke="#959ba6" stroke-width="0.9"/><circle cx="4.7" cy="4.7" r="2.18" fill="#87909e"/></svg>
<div class="t" style="left:645.00px;top:249.00px;font-size:7.06px;line-height:7.06px;color:#5f646c;font-weight:400;-webkit-text-stroke:0.12px #5f646c;">OPEN</div>
<div class="b" style="left:702.40px;top:244.55px;width:55.30px;height:16.90px;background:#2ecd6f;border-radius:2.5px"></div>
<div class="t tg" style="left:702.4px;width:55.3px;top:249px;color:#ffffff">On Track</div>
<div class="b" style="left:762.90px;top:244.55px;width:55.50px;height:16.90px;background:#f9d900;border-radius:2.5px"></div>
<div class="t tg" style="left:762.9px;width:55.5px;top:249px;color:#202020">At Risk</div>
<div class="b" style="left:823.40px;top:244.55px;width:55.80px;height:16.90px;background:#f9d900;border-radius:2.5px"></div>
<div class="t tg" style="left:823.4px;width:55.8px;top:249px;color:#202020">At Risk</div>
<div class="b" style="left:889.20px;top:252.95px;width:4.60px;height:1.00px;background:#9aa0a8"></div>
<svg class="b" style="left:957.80px;top:251.45px" width="9" height="3" viewBox="0 0 9 3" fill="none"><circle cx="1.1" cy="1.5" r="0.75" fill="#2a2e34"/><circle cx="4.3" cy="1.5" r="0.75" fill="#2a2e34"/><circle cx="7.5" cy="1.5" r="0.75" fill="#2a2e34"/></svg>
<svg class="b" style="left:46.20px;top:268.74px" width="10.0" height="10.0" viewBox="0 0 10.0 10.0" fill="none"><circle cx="5.0" cy="5.0" r="4.025" stroke="#959ba6" stroke-width="0.95"/><circle cx="5.0" cy="5.0" r="2.83" fill="#87909e"/></svg>
<div class="t nm" style="left:63.9px;top:270px">Browsedrive - Logo Design<span class="di"></span></div>
<svg class="b" style="left:249.80px;top:270.54px" width="10" height="7" viewBox="0 0 10 7" fill="none"><circle cx="3.1" cy="2" r="1.6" stroke="#50545c" stroke-width="0.9"/><path d="M0.5 6.6 Q0.6 4.2 3.1 4.2 Q5.6 4.2 5.7 6.6" stroke="#50545c" stroke-width="0.9"/><path d="M7.6 1.3 V4.2 M6.15 2.75 H9.05" stroke="#50545c" stroke-width="0.9"/></svg>
<svg class="b" style="left:310.60px;top:269.94px" width="10" height="8.5" viewBox="0 0 10 8.5" fill="none"><path d="M4.4 0.7 A3.65 3.55 0 1 0 6.5 7.3 L8.1 7.7 L7.7 6.0 A3.65 3.55 0 0 0 4.4 0.7 Z" stroke="#50545c" stroke-width="0.95" stroke-linejoin="round"/></svg>
<div class="b" style="left:367.30px;top:265.94px;width:91.80px;height:16.80px;background:#0ea5ef;border-radius:2.5px"></div>
<div class="t tg" style="left:367.3px;width:91.8px;top:270px;font-size:8.8px;line-height:8.8px;color:#fff">Review &amp; Feedback</div>
<div class="t ds" style="left:469px;top:270px">Browsedrive is rebranding and nee...</div>
<div class="b" style="left:629.20px;top:267.04px;width:40.80px;height:14.90px;background:#e9eaee;border-radius:3px"></div>
<svg class="b" style="left:632.20px;top:269.44px" width="9.4" height="9.4" viewBox="0 0 9.4 9.4" fill="none"><circle cx="4.7" cy="4.7" r="3.75" stroke="#959ba6" stroke-width="0.9"/><circle cx="4.7" cy="4.7" r="2.18" fill="#87909e"/></svg>
<div class="t" style="left:645.00px;top:271.00px;font-size:7.06px;line-height:7.06px;color:#5f646c;font-weight:400;-webkit-text-stroke:0.12px #5f646c;">OPEN</div>
<div class="b" style="left:702.40px;top:265.84px;width:55.30px;height:16.90px;background:#e50000;border-radius:2.5px"></div>
<div class="t tg" style="left:702.4px;width:55.3px;top:270px;color:#ffffff">Off Track</div>
<div class="b" style="left:762.90px;top:265.84px;width:55.50px;height:16.90px;background:#2ecd6f;border-radius:2.5px"></div>
<div class="t tg" style="left:762.9px;width:55.5px;top:270px;color:#ffffff">On Track</div>
<div class="b" style="left:823.40px;top:265.84px;width:55.80px;height:16.90px;background:#e50000;border-radius:2.5px"></div>
<div class="t tg" style="left:823.4px;width:55.8px;top:270px;color:#ffffff">Off Track</div>
<div class="b" style="left:889.20px;top:274.24px;width:4.60px;height:1.00px;background:#9aa0a8"></div>
<svg class="b" style="left:957.80px;top:272.74px" width="9" height="3" viewBox="0 0 9 3" fill="none"><circle cx="1.1" cy="1.5" r="0.75" fill="#2a2e34"/><circle cx="4.3" cy="1.5" r="0.75" fill="#2a2e34"/><circle cx="7.5" cy="1.5" r="0.75" fill="#2a2e34"/></svg>
<svg class="b" style="left:46.20px;top:290.03px" width="10.0" height="10.0" viewBox="0 0 10.0 10.0" fill="none"><circle cx="5.0" cy="5.0" r="4.025" stroke="#959ba6" stroke-width="0.95"/><circle cx="5.0" cy="5.0" r="2.83" fill="#87909e"/></svg>
<div class="t nm" style="left:63.9px;top:291px">Brainlounge - Brand Package<span class="di"></span></div>
<svg class="b" style="left:249.80px;top:291.83px" width="10" height="7" viewBox="0 0 10 7" fill="none"><circle cx="3.1" cy="2" r="1.6" stroke="#50545c" stroke-width="0.9"/><path d="M0.5 6.6 Q0.6 4.2 3.1 4.2 Q5.6 4.2 5.7 6.6" stroke="#50545c" stroke-width="0.9"/><path d="M7.6 1.3 V4.2 M6.15 2.75 H9.05" stroke="#50545c" stroke-width="0.9"/></svg>
<svg class="b" style="left:310.60px;top:291.23px" width="10" height="8.5" viewBox="0 0 10 8.5" fill="none"><path d="M4.4 0.7 A3.65 3.55 0 1 0 6.5 7.3 L8.1 7.7 L7.7 6.0 A3.65 3.55 0 0 0 4.4 0.7 Z" stroke="#50545c" stroke-width="0.95" stroke-linejoin="round"/></svg>
<div class="b" style="left:367.30px;top:287.23px;width:91.80px;height:16.80px;background:#9b59b6;border-radius:2.5px"></div>
<div class="t tg" style="left:367.3px;width:91.8px;top:291px;font-size:8.8px;line-height:8.8px;color:#fff">Definition</div>
<div class="t ds" style="left:469px;top:291px">Brainlounge is a new business that ...</div>
<div class="b" style="left:629.20px;top:288.33px;width:40.80px;height:14.90px;background:#e9eaee;border-radius:3px"></div>
<svg class="b" style="left:632.20px;top:290.73px" width="9.4" height="9.4" viewBox="0 0 9.4 9.4" fill="none"><circle cx="4.7" cy="4.7" r="3.75" stroke="#959ba6" stroke-width="0.9"/><circle cx="4.7" cy="4.7" r="2.18" fill="#87909e"/></svg>
<div class="t" style="left:645.00px;top:292.00px;font-size:7.06px;line-height:7.06px;color:#5f646c;font-weight:400;-webkit-text-stroke:0.12px #5f646c;">OPEN</div>
<div class="b" style="left:702.40px;top:287.13px;width:55.30px;height:16.90px;background:#2ecd6f;border-radius:2.5px"></div>
<div class="t tg" style="left:702.4px;width:55.3px;top:291px;color:#ffffff">On Track</div>
<div class="b" style="left:762.90px;top:287.13px;width:55.50px;height:16.90px;background:#2ecd6f;border-radius:2.5px"></div>
<div class="t tg" style="left:762.9px;width:55.5px;top:291px;color:#ffffff">On Track</div>
<div class="b" style="left:823.40px;top:287.13px;width:55.80px;height:16.90px;background:#2ecd6f;border-radius:2.5px"></div>
<div class="t tg" style="left:823.4px;width:55.8px;top:291px;color:#ffffff">On Track</div>
<div class="b" style="left:889.20px;top:295.53px;width:4.60px;height:1.00px;background:#9aa0a8"></div>
<svg class="b" style="left:957.80px;top:294.03px" width="9" height="3" viewBox="0 0 9 3" fill="none"><circle cx="1.1" cy="1.5" r="0.75" fill="#2a2e34"/><circle cx="4.3" cy="1.5" r="0.75" fill="#2a2e34"/><circle cx="7.5" cy="1.5" r="0.75" fill="#2a2e34"/></svg>
<svg class="b" style="left:46.20px;top:311.32px" width="10.0" height="10.0" viewBox="0 0 10.0 10.0" fill="none"><circle cx="5.0" cy="5.0" r="4.025" stroke="#959ba6" stroke-width="0.95"/><circle cx="5.0" cy="5.0" r="2.83" fill="#87909e"/></svg>
<div class="t nm" style="left:63.9px;top:313px">Wikido - Logo Design<span class="di"></span></div>
<svg class="b" style="left:249.80px;top:313.12px" width="10" height="7" viewBox="0 0 10 7" fill="none"><circle cx="3.1" cy="2" r="1.6" stroke="#50545c" stroke-width="0.9"/><path d="M0.5 6.6 Q0.6 4.2 3.1 4.2 Q5.6 4.2 5.7 6.6" stroke="#50545c" stroke-width="0.9"/><path d="M7.6 1.3 V4.2 M6.15 2.75 H9.05" stroke="#50545c" stroke-width="0.9"/></svg>
<svg class="b" style="left:310.60px;top:312.52px" width="10" height="8.5" viewBox="0 0 10 8.5" fill="none"><path d="M4.4 0.7 A3.65 3.55 0 1 0 6.5 7.3 L8.1 7.7 L7.7 6.0 A3.65 3.55 0 0 0 4.4 0.7 Z" stroke="#50545c" stroke-width="0.95" stroke-linejoin="round"/></svg>
<div class="b" style="left:367.30px;top:308.52px;width:91.80px;height:16.80px;background:#9b59b6;border-radius:2.5px"></div>
<div class="t tg" style="left:367.3px;width:91.8px;top:313px;font-size:8.8px;line-height:8.8px;color:#fff">Definition</div>
<div class="t ds" style="left:469px;top:313px">Wikido needs a special logo design...</div>
<div class="b" style="left:629.20px;top:309.62px;width:40.80px;height:14.90px;background:#e9eaee;border-radius:3px"></div>
<svg class="b" style="left:632.20px;top:312.02px" width="9.4" height="9.4" viewBox="0 0 9.4 9.4" fill="none"><circle cx="4.7" cy="4.7" r="3.75" stroke="#959ba6" stroke-width="0.9"/><circle cx="4.7" cy="4.7" r="2.18" fill="#87909e"/></svg>
<div class="t" style="left:645.00px;top:313.00px;font-size:7.06px;line-height:7.06px;color:#5f646c;font-weight:400;-webkit-text-stroke:0.12px #5f646c;">OPEN</div>
<div class="b" style="left:702.40px;top:308.42px;width:55.30px;height:16.90px;background:#2ecd6f;border-radius:2.5px"></div>
<div class="t tg" style="left:702.4px;width:55.3px;top:313px;color:#ffffff">On Track</div>
<div class="b" style="left:762.90px;top:308.42px;width:55.50px;height:16.90px;background:#2ecd6f;border-radius:2.5px"></div>
<div class="t tg" style="left:762.9px;width:55.5px;top:313px;color:#ffffff">On Track</div>
<div class="b" style="left:823.40px;top:308.42px;width:55.80px;height:16.90px;background:#2ecd6f;border-radius:2.5px"></div>
<div class="t tg" style="left:823.4px;width:55.8px;top:313px;color:#ffffff">On Track</div>
<div class="b" style="left:889.20px;top:316.82px;width:4.60px;height:1.00px;background:#9aa0a8"></div>
<svg class="b" style="left:957.80px;top:315.32px" width="9" height="3" viewBox="0 0 9 3" fill="none"><circle cx="1.1" cy="1.5" r="0.75" fill="#2a2e34"/><circle cx="4.3" cy="1.5" r="0.75" fill="#2a2e34"/><circle cx="7.5" cy="1.5" r="0.75" fill="#2a2e34"/></svg>
<svg class="b" style="left:46.20px;top:332.61px" width="10.0" height="10.0" viewBox="0 0 10.0 10.0" fill="none"><circle cx="5.0" cy="5.0" r="4.025" stroke="#959ba6" stroke-width="0.95"/><circle cx="5.0" cy="5.0" r="2.83" fill="#87909e"/></svg>
<div class="t nm" style="left:63.9px;top:334px">Oloo - Swag Design<span class="di"></span></div>
<svg class="b" style="left:249.80px;top:334.41px" width="10" height="7" viewBox="0 0 10 7" fill="none"><circle cx="3.1" cy="2" r="1.6" stroke="#50545c" stroke-width="0.9"/><path d="M0.5 6.6 Q0.6 4.2 3.1 4.2 Q5.6 4.2 5.7 6.6" stroke="#50545c" stroke-width="0.9"/><path d="M7.6 1.3 V4.2 M6.15 2.75 H9.05" stroke="#50545c" stroke-width="0.9"/></svg>
<svg class="b" style="left:310.60px;top:333.81px" width="10" height="8.5" viewBox="0 0 10 8.5" fill="none"><path d="M4.4 0.7 A3.65 3.55 0 1 0 6.5 7.3 L8.1 7.7 L7.7 6.0 A3.65 3.55 0 0 0 4.4 0.7 Z" stroke="#50545c" stroke-width="0.95" stroke-linejoin="round"/></svg>
<div class="b" style="left:367.30px;top:329.81px;width:91.80px;height:16.80px;background:#0ea5ef;border-radius:2.5px"></div>
<div class="t tg" style="left:367.3px;width:91.8px;top:334px;font-size:8.8px;line-height:8.8px;color:#fff">Review &amp; Feedback</div>
<div class="t ds" style="left:469px;top:334px">Oloo is attending a conference eve...</div>
<div class="b" style="left:629.20px;top:330.91px;width:40.80px;height:14.90px;background:#e9eaee;border-radius:3px"></div>
<svg class="b" style="left:632.20px;top:333.31px" width="9.4" height="9.4" viewBox="0 0 9.4 9.4" fill="none"><circle cx="4.7" cy="4.7" r="3.75" stroke="#959ba6" stroke-width="0.9"/><circle cx="4.7" cy="4.7" r="2.18" fill="#87909e"/></svg>
<div class="t" style="left:645.00px;top:335.00px;font-size:7.06px;line-height:7.06px;color:#5f646c;font-weight:400;-webkit-text-stroke:0.12px #5f646c;">OPEN</div>
<div class="b" style="left:702.40px;top:329.71px;width:55.30px;height:16.90px;background:#2ecd6f;border-radius:2.5px"></div>
<div class="t tg" style="left:702.4px;width:55.3px;top:334px;color:#ffffff">On Track</div>
<div class="b" style="left:762.90px;top:329.71px;width:55.50px;height:16.90px;background:#2ecd6f;border-radius:2.5px"></div>
<div class="t tg" style="left:762.9px;width:55.5px;top:334px;color:#ffffff">On Track</div>
<div class="b" style="left:823.40px;top:329.71px;width:55.80px;height:16.90px;background:#2ecd6f;border-radius:2.5px"></div>
<div class="t tg" style="left:823.4px;width:55.8px;top:334px;color:#ffffff">On Track</div>
<div class="b" style="left:889.20px;top:338.11px;width:4.60px;height:1.00px;background:#9aa0a8"></div>
<svg class="b" style="left:957.80px;top:336.61px" width="9" height="3" viewBox="0 0 9 3" fill="none"><circle cx="1.1" cy="1.5" r="0.75" fill="#2a2e34"/><circle cx="4.3" cy="1.5" r="0.75" fill="#2a2e34"/><circle cx="7.5" cy="1.5" r="0.75" fill="#2a2e34"/></svg>
<svg class="b" style="left:46.20px;top:353.90px" width="10.0" height="10.0" viewBox="0 0 10.0 10.0" fill="none"><circle cx="5.0" cy="5.0" r="4.025" stroke="#959ba6" stroke-width="0.95"/><circle cx="5.0" cy="5.0" r="2.83" fill="#87909e"/></svg>
<div class="t nm" style="left:63.9px;top:355px">Meejo - Facebook Campaign<span class="di"></span></div>
<svg class="b" style="left:249.80px;top:355.70px" width="10" height="7" viewBox="0 0 10 7" fill="none"><circle cx="3.1" cy="2" r="1.6" stroke="#50545c" stroke-width="0.9"/><path d="M0.5 6.6 Q0.6 4.2 3.1 4.2 Q5.6 4.2 5.7 6.6" stroke="#50545c" stroke-width="0.9"/><path d="M7.6 1.3 V4.2 M6.15 2.75 H9.05" stroke="#50545c" stroke-width="0.9"/></svg>
<svg class="b" style="left:310.60px;top:355.10px" width="10" height="8.5" viewBox="0 0 10 8.5" fill="none"><path d="M4.4 0.7 A3.65 3.55 0 1 0 6.5 7.3 L8.1 7.7 L7.7 6.0 A3.65 3.55 0 0 0 4.4 0.7 Z" stroke="#50545c" stroke-width="0.95" stroke-linejoin="round"/></svg>
<div class="b" style="left:367.30px;top:351.10px;width:91.80px;height:16.80px;background:#0ea5ef;border-radius:2.5px"></div>
<div class="t tg" style="left:367.3px;width:91.8px;top:355px;font-size:8.8px;line-height:8.8px;color:#fff">Review &amp; Feedback</div>
<div class="t ds" style="left:469px;top:355px">Meejo is running a month-long ...</div>
<div class="b" style="left:629.20px;top:352.20px;width:40.80px;height:14.90px;background:#e9eaee;border-radius:3px"></div>
<svg class="b" style="left:632.20px;top:354.60px" width="9.4" height="9.4" viewBox="0 0 9.4 9.4" fill="none"><circle cx="4.7" cy="4.7" r="3.75" stroke="#959ba6" stroke-width="0.9"/><circle cx="4.7" cy="4.7" r="2.18" fill="#87909e"/></svg>
<div class="t" style="left:645.00px;top:356.00px;font-size:7.06px;line-height:7.06px;color:#5f646c;font-weight:400;-webkit-text-stroke:0.12px #5f646c;">OPEN</div>
<div class="b" style="left:702.40px;top:351.00px;width:55.30px;height:16.90px;background:#2ecd6f;border-radius:2.5px"></div>
<div class="t tg" style="left:702.4px;width:55.3px;top:355px;color:#ffffff">On Track</div>
<div class="b" style="left:762.90px;top:351.00px;width:55.50px;height:16.90px;background:#2ecd6f;border-radius:2.5px"></div>
<div class="t tg" style="left:762.9px;width:55.5px;top:355px;color:#ffffff">On Track</div>
<div class="b" style="left:823.40px;top:351.00px;width:55.80px;height:16.90px;background:#2ecd6f;border-radius:2.5px"></div>
<div class="t tg" style="left:823.4px;width:55.8px;top:355px;color:#ffffff">On Track</div>
<div class="b" style="left:889.20px;top:359.40px;width:4.60px;height:1.00px;background:#9aa0a8"></div>
<svg class="b" style="left:957.80px;top:357.90px" width="9" height="3" viewBox="0 0 9 3" fill="none"><circle cx="1.1" cy="1.5" r="0.75" fill="#2a2e34"/><circle cx="4.3" cy="1.5" r="0.75" fill="#2a2e34"/><circle cx="7.5" cy="1.5" r="0.75" fill="#2a2e34"/></svg>
<svg class="b" style="left:46.20px;top:375.19px" width="10.0" height="10.0" viewBox="0 0 10.0 10.0" fill="none"><circle cx="5.0" cy="5.0" r="4.025" stroke="#959ba6" stroke-width="0.95"/><circle cx="5.0" cy="5.0" r="2.83" fill="#87909e"/></svg>
<div class="t nm" style="left:63.9px;top:376px">Devbu - Video for Social Media Campa...<span class="di"></span></div>
<svg class="b" style="left:249.80px;top:376.99px" width="10" height="7" viewBox="0 0 10 7" fill="none"><circle cx="3.1" cy="2" r="1.6" stroke="#50545c" stroke-width="0.9"/><path d="M0.5 6.6 Q0.6 4.2 3.1 4.2 Q5.6 4.2 5.7 6.6" stroke="#50545c" stroke-width="0.9"/><path d="M7.6 1.3 V4.2 M6.15 2.75 H9.05" stroke="#50545c" stroke-width="0.9"/></svg>
<svg class="b" style="left:310.60px;top:376.39px" width="10" height="8.5" viewBox="0 0 10 8.5" fill="none"><path d="M4.4 0.7 A3.65 3.55 0 1 0 6.5 7.3 L8.1 7.7 L7.7 6.0 A3.65 3.55 0 0 0 4.4 0.7 Z" stroke="#50545c" stroke-width="0.95" stroke-linejoin="round"/></svg>
<div class="b" style="left:367.30px;top:372.39px;width:91.80px;height:16.80px;background:#7c4dff;border-radius:2.5px"></div>
<div class="t tg" style="left:367.3px;width:91.8px;top:376px;font-size:8.8px;line-height:8.8px;color:#fff">Scheduling</div>
<div class="t ds" style="left:469px;top:376px">Devbu needs complete video pro-...</div>
<div class="b" style="left:629.20px;top:373.49px;width:40.80px;height:14.90px;background:#e9eaee;border-radius:3px"></div>
<svg class="b" style="left:632.20px;top:375.89px" width="9.4" height="9.4" viewBox="0 0 9.4 9.4" fill="none"><circle cx="4.7" cy="4.7" r="3.75" stroke="#959ba6" stroke-width="0.9"/><circle cx="4.7" cy="4.7" r="2.18" fill="#87909e"/></svg>
<div class="t" style="left:645.00px;top:377.00px;font-size:7.06px;line-height:7.06px;color:#5f646c;font-weight:400;-webkit-text-stroke:0.12px #5f646c;">OPEN</div>
<div class="b" style="left:702.40px;top:372.29px;width:55.30px;height:16.90px;background:#2ecd6f;border-radius:2.5px"></div>
<div class="t tg" style="left:702.4px;width:55.3px;top:376px;color:#ffffff">On Track</div>
<div class="b" style="left:762.90px;top:372.29px;width:55.50px;height:16.90px;background:#2ecd6f;border-radius:2.5px"></div>
<div class="t tg" style="left:762.9px;width:55.5px;top:376px;color:#ffffff">On Track</div>
<div class="b" style="left:823.40px;top:372.29px;width:55.80px;height:16.90px;background:#2ecd6f;border-radius:2.5px"></div>
<div class="t tg" style="left:823.4px;width:55.8px;top:376px;color:#ffffff">On Track</div>
<div class="b" style="left:889.20px;top:380.69px;width:4.60px;height:1.00px;background:#9aa0a8"></div>
<svg class="b" style="left:957.80px;top:379.19px" width="9" height="3" viewBox="0 0 9 3" fill="none"><circle cx="1.1" cy="1.5" r="0.75" fill="#2a2e34"/><circle cx="4.3" cy="1.5" r="0.75" fill="#2a2e34"/><circle cx="7.5" cy="1.5" r="0.75" fill="#2a2e34"/></svg>
<svg class="b" style="left:46.20px;top:396.48px" width="10.0" height="10.0" viewBox="0 0 10.0 10.0" fill="none"><circle cx="5.0" cy="5.0" r="4.025" stroke="#959ba6" stroke-width="0.95"/><circle cx="5.0" cy="5.0" r="2.83" fill="#87909e"/></svg>
<div class="t nm" style="left:63.9px;top:398px">Feedfire - Advertising Assets<span class="di"></span></div>
<svg class="b" style="left:249.80px;top:398.28px" width="10" height="7" viewBox="0 0 10 7" fill="none"><circle cx="3.1" cy="2" r="1.6" stroke="#50545c" stroke-width="0.9"/><path d="M0.5 6.6 Q0.6 4.2 3.1 4.2 Q5.6 4.2 5.7 6.6" stroke="#50545c" stroke-width="0.9"/><path d="M7.6 1.3 V4.2 M6.15 2.75 H9.05" stroke="#50545c" stroke-width="0.9"/></svg>
<svg class="b" style="left:310.60px;top:397.68px" width="10" height="8.5" viewBox="0 0 10 8.5" fill="none"><path d="M4.4 0.7 A3.65 3.55 0 1 0 6.5 7.3 L8.1 7.7 L7.7 6.0 A3.65 3.55 0 0 0 4.4 0.7 Z" stroke="#50545c" stroke-width="0.95" stroke-linejoin="round"/></svg>
<div class="b" style="left:367.30px;top:393.68px;width:91.80px;height:16.80px;background:#7c4dff;border-radius:2.5px"></div>
<div class="t tg" style="left:367.3px;width:91.8px;top:398px;font-size:8.8px;line-height:8.8px;color:#fff">Scheduling</div>
<div class="t ds" style="left:469px;top:398px">Feedfire is running 2 print advertis-...</div>
<div class="b" style="left:629.20px;top:394.78px;width:40.80px;height:14.90px;background:#e9eaee;border-radius:3px"></div>
<svg class="b" style="left:632.20px;top:397.18px" width="9.4" height="9.4" viewBox="0 0 9.4 9.4" fill="none"><circle cx="4.7" cy="4.7" r="3.75" stroke="#959ba6" stroke-width="0.9"/><circle cx="4.7" cy="4.7" r="2.18" fill="#87909e"/></svg>
<div class="t" style="left:645.00px;top:398.00px;font-size:7.06px;line-height:7.06px;color:#5f646c;font-weight:400;-webkit-text-stroke:0.12px #5f646c;">OPEN</div>
<div class="b" style="left:702.40px;top:393.58px;width:55.30px;height:16.90px;background:#2ecd6f;border-radius:2.5px"></div>
<div class="t tg" style="left:702.4px;width:55.3px;top:398px;color:#ffffff">On Track</div>
<div class="b" style="left:762.90px;top:393.58px;width:55.50px;height:16.90px;background:#2ecd6f;border-radius:2.5px"></div>
<div class="t tg" style="left:762.9px;width:55.5px;top:398px;color:#ffffff">On Track</div>
<div class="b" style="left:823.40px;top:393.58px;width:55.80px;height:16.90px;background:#2ecd6f;border-radius:2.5px"></div>
<div class="t tg" style="left:823.4px;width:55.8px;top:398px;color:#ffffff">On Track</div>
<div class="b" style="left:889.20px;top:401.98px;width:4.60px;height:1.00px;background:#9aa0a8"></div>
<svg class="b" style="left:957.80px;top:400.48px" width="9" height="3" viewBox="0 0 9 3" fill="none"><circle cx="1.1" cy="1.5" r="0.75" fill="#2a2e34"/><circle cx="4.3" cy="1.5" r="0.75" fill="#2a2e34"/><circle cx="7.5" cy="1.5" r="0.75" fill="#2a2e34"/></svg>
<svg class="b" style="left:46.20px;top:417.77px" width="10.0" height="10.0" viewBox="0 0 10.0 10.0" fill="none"><circle cx="5.0" cy="5.0" r="4.025" stroke="#959ba6" stroke-width="0.95"/><circle cx="5.0" cy="5.0" r="2.83" fill="#87909e"/></svg>
<div class="t nm" style="left:63.9px;top:419px">Yodoo - Brand Package<span class="di"></span></div>
<svg class="b" style="left:249.80px;top:419.57px" width="10" height="7" viewBox="0 0 10 7" fill="none"><circle cx="3.1" cy="2" r="1.6" stroke="#50545c" stroke-width="0.9"/><path d="M0.5 6.6 Q0.6 4.2 3.1 4.2 Q5.6 4.2 5.7 6.6" stroke="#50545c" stroke-width="0.9"/><path d="M7.6 1.3 V4.2 M6.15 2.75 H9.05" stroke="#50545c" stroke-width="0.9"/></svg>
<svg class="b" style="left:310.60px;top:418.97px" width="10" height="8.5" viewBox="0 0 10 8.5" fill="none"><path d="M4.4 0.7 A3.65 3.55 0 1 0 6.5 7.3 L8.1 7.7 L7.7 6.0 A3.65 3.55 0 0 0 4.4 0.7 Z" stroke="#50545c" stroke-width="0.95" stroke-linejoin="round"/></svg>
<div class="b" style="left:367.30px;top:414.97px;width:91.80px;height:16.80px;background:#0a2fe8;border-radius:2.5px"></div>
<div class="t tg" style="left:367.3px;width:91.8px;top:419px;font-size:8.8px;line-height:8.8px;color:#fff">Creative Production</div>
<div class="t ds" style="left:469px;top:419px">Yodoo is a new company that need...</div>
<div class="b" style="left:629.20px;top:416.07px;width:40.80px;height:14.90px;background:#e9eaee;border-radius:3px"></div>
<svg class="b" style="left:632.20px;top:418.47px" width="9.4" height="9.4" viewBox="0 0 9.4 9.4" fill="none"><circle cx="4.7" cy="4.7" r="3.75" stroke="#959ba6" stroke-width="0.9"/><circle cx="4.7" cy="4.7" r="2.18" fill="#87909e"/></svg>
<div class="t" style="left:645.00px;top:420.00px;font-size:7.06px;line-height:7.06px;color:#5f646c;font-weight:400;-webkit-text-stroke:0.12px #5f646c;">OPEN</div>
<div class="b" style="left:702.40px;top:414.87px;width:55.30px;height:16.90px;background:#2ecd6f;border-radius:2.5px"></div>
<div class="t tg" style="left:702.4px;width:55.3px;top:419px;color:#ffffff">On Track</div>
<div class="b" style="left:762.90px;top:414.87px;width:55.50px;height:16.90px;background:#2ecd6f;border-radius:2.5px"></div>
<div class="t tg" style="left:762.9px;width:55.5px;top:419px;color:#ffffff">On Track</div>
<div class="b" style="left:823.40px;top:414.87px;width:55.80px;height:16.90px;background:#2ecd6f;border-radius:2.5px"></div>
<div class="t tg" style="left:823.4px;width:55.8px;top:419px;color:#ffffff">On Track</div>
<div class="b" style="left:889.20px;top:423.27px;width:4.60px;height:1.00px;background:#9aa0a8"></div>
<svg class="b" style="left:957.80px;top:421.77px" width="9" height="3" viewBox="0 0 9 3" fill="none"><circle cx="1.1" cy="1.5" r="0.75" fill="#2a2e34"/><circle cx="4.3" cy="1.5" r="0.75" fill="#2a2e34"/><circle cx="7.5" cy="1.5" r="0.75" fill="#2a2e34"/></svg>
<svg class="b" style="left:46.20px;top:439.06px" width="10.0" height="10.0" viewBox="0 0 10.0 10.0" fill="none"><circle cx="5.0" cy="5.0" r="4.025" stroke="#959ba6" stroke-width="0.95"/><circle cx="5.0" cy="5.0" r="2.83" fill="#87909e"/></svg>
<div class="t nm" style="left:63.9px;top:440px">Zoomzone - Video for YouTube Campa...<span class="di"></span></div>
<svg class="b" style="left:249.80px;top:440.86px" width="10" height="7" viewBox="0 0 10 7" fill="none"><circle cx="3.1" cy="2" r="1.6" stroke="#50545c" stroke-width="0.9"/><path d="M0.5 6.6 Q0.6 4.2 3.1 4.2 Q5.6 4.2 5.7 6.6" stroke="#50545c" stroke-width="0.9"/><path d="M7.6 1.3 V4.2 M6.15 2.75 H9.05" stroke="#50545c" stroke-width="0.9"/></svg>
<svg class="b" style="left:310.60px;top:440.26px" width="10" height="8.5" viewBox="0 0 10 8.5" fill="none"><path d="M4.4 0.7 A3.65 3.55 0 1 0 6.5 7.3 L8.1 7.7 L7.7 6.0 A3.65 3.55 0 0 0 4.4 0.7 Z" stroke="#50545c" stroke-width="0.95" stroke-linejoin="round"/></svg>
<div class="b" style="left:367.30px;top:436.26px;width:91.80px;height:16.80px;background:#9b59b6;border-radius:2.5px"></div>
<div class="t tg" style="left:367.3px;width:91.8px;top:440px;font-size:8.8px;line-height:8.8px;color:#fff">Definition</div>
<div class="t ds" style="left:469px;top:440px">Zoomzone needs complete video ...</div>
<div class="b" style="left:629.20px;top:437.36px;width:40.80px;height:14.90px;background:#e9eaee;border-radius:3px"></div>
<svg class="b" style="left:632.20px;top:439.76px" width="9.4" height="9.4" viewBox="0 0 9.4 9.4" fill="none"><circle cx="4.7" cy="4.7" r="3.75" stroke="#959ba6" stroke-width="0.9"/><circle cx="4.7" cy="4.7" r="2.18" fill="#87909e"/></svg>
<div class="t" style="left:645.00px;top:441.00px;font-size:7.06px;line-height:7.06px;color:#5f646c;font-weight:400;-webkit-text-stroke:0.12px #5f646c;">OPEN</div>
<div class="b" style="left:702.40px;top:436.16px;width:55.30px;height:16.90px;background:#2ecd6f;border-radius:2.5px"></div>
<div class="t tg" style="left:702.4px;width:55.3px;top:440px;color:#ffffff">On Track</div>
<div class="b" style="left:762.90px;top:436.16px;width:55.50px;height:16.90px;background:#2ecd6f;border-radius:2.5px"></div>
<div class="t tg" style="left:762.9px;width:55.5px;top:440px;color:#ffffff">On Track</div>
<div class="b" style="left:823.40px;top:436.16px;width:55.80px;height:16.90px;background:#2ecd6f;border-radius:2.5px"></div>
<div class="t tg" style="left:823.4px;width:55.8px;top:440px;color:#ffffff">On Track</div>
<div class="b" style="left:889.20px;top:444.56px;width:4.60px;height:1.00px;background:#9aa0a8"></div>
<svg class="b" style="left:957.80px;top:443.06px" width="9" height="3" viewBox="0 0 9 3" fill="none"><circle cx="1.1" cy="1.5" r="0.75" fill="#2a2e34"/><circle cx="4.3" cy="1.5" r="0.75" fill="#2a2e34"/><circle cx="7.5" cy="1.5" r="0.75" fill="#2a2e34"/></svg>
<svg class="b" style="left:47.80px;top:462.30px" width="7.5" height="7.5" viewBox="0 0 7.5 7.5" fill="none"><path d="M3.75 0.2 V7.3 M0.2 3.75 H7.3" stroke="#7f8591" stroke-width="0.95"/></svg>
<div class="t" style="left:63.90px;top:462.00px;font-size:8.5px;line-height:8.5px;color:#6f7580;font-weight:400;-webkit-text-stroke:0.08px #6f7580;">Add Task</div>
<div class="b" style="left:158px;top:513px;width:670px;height:30px;background:#fff;border-radius:14px;box-shadow:0 -2px 26px 4px rgba(0,0,0,0.13)"></div>
<div class="b" style="left:1px;top:513px;width:1017px;height:3px;background:#fff"></div>
<div class="b" style="left:987.9px;top:484.9px;width:24px;height:24.3px;border-radius:50%;background:linear-gradient(240deg,#f63fa6 0%,#e541b8 40%,#a24de6 100%);box-shadow:0 2px 8px rgba(230,60,160,0.25)"></div>
<svg class="b" style="left:993.00px;top:490.00px" width="14" height="14" viewBox="0 0 14 14" fill="none"><path d="M8.4 2.2 L9.4 5 L12.2 6 L9.4 7 L8.4 9.8 L7.4 7 L4.6 6 L7.4 5 Z" fill="#fff"/><circle cx="4.2" cy="10.2" r="1.1" fill="#fff"/></svg></div></body></html>
